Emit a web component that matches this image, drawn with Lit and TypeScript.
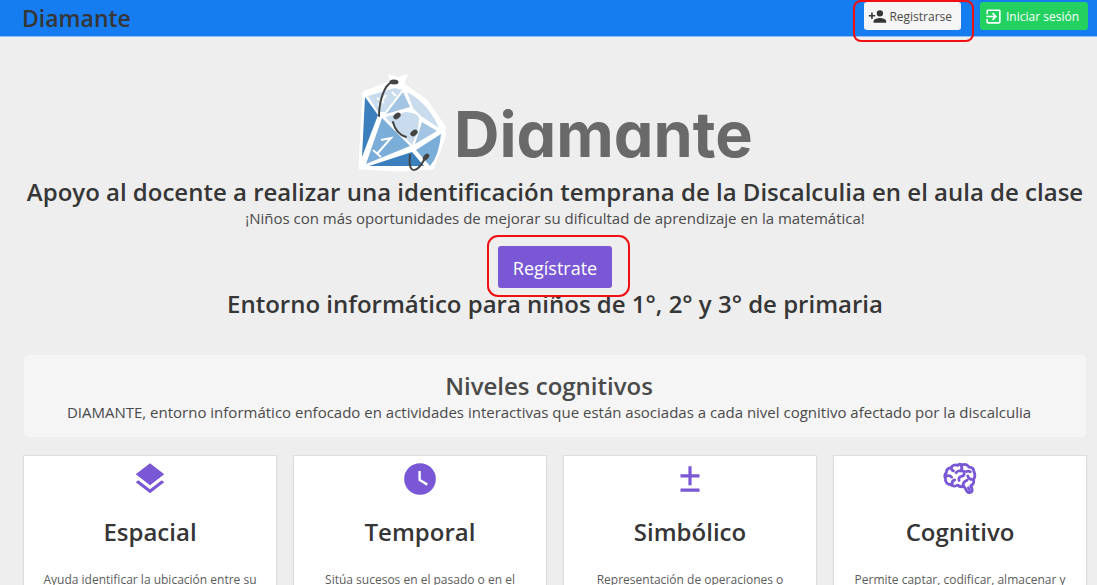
import { LitElement, html, css, svg } from "lit";
import { customElement, property } from "lit/decorators.js";

const layersIcon = svg`<path d="M12 16l7.36-5.73L21 9l-9-7-9 7 1.63 1.27M12 18.54l-7.38-5.73L3 14.07l9 7 9-7-1.63-1.27L12 18.54z"/>`;
const clockIcon = svg`<path d="M12 2a10 10 0 1 0 0 20 10 10 0 0 0 0-20zm4.2 14.2L11 13V7h1.5v5.2l4.5 2.7-.8 1.3z"/>`;
const plusMinusIcon = svg`<path d="M11 4h2v5h5v2h-5v5h-2v-5H6V9h5zM6 18h12v2H6z"/>`;
const brainIcon = svg`<g fill="none" stroke="currentColor" stroke-width="1.8" stroke-linecap="round" stroke-linejoin="round">
  <path d="M10.500 3.400C8.800 2.800 7 3.400 6.400 4.900 4.600 4.900 3.300 6.200 3.400 7.900 2.400 9 2.300 10.700 2.800 11.800 2.600 13.900 4 15.500 6 15.500 7.200 16.700 9.300 16.700 10.500 15.900 11.600 16.900 13.200 17 14.300 16.600 15.200 17.500 15.700 18.400 16.300 19.600 17.200 21.300 20.100 20.500 19.600 18.300 19.400 17.500 19 16.900 18.800 16.200 20.600 15.600 21 13.700 20.500 12.400 21.600 11 21.600 8.700 20.900 7.600 20.700 5.600 19.400 4.500 17.800 4.500 16.600 2.900 14.600 2.500 13.100 3.100 12.200 2.500 11.200 2.700 10.500 3.400z"/>
  <path d="M12.800 3.600c.6 1.200.5 2.300-.2 3.400M14.500 7.200c-1.900-.7-3.900-.5-5 .8M6.500 5.100c.1.900.6 1.500 1.400 1.700M2.900 10.500c1.500-.9 2.900-.7 3.800.3M7 15.200c-.1-1.400.6-2.300 1.600-2.600M11.400 12.900c-.4-1.500.2-2.300 1.400-2.500 1.300-.2 1.900-.9 1.800-1.900M14 16.400c-.1-2 .8-3.200 2.400-3.600M20.300 12.200c-1.700.2-3.200-.5-3.400-2.200M18.500 7.400c-.9-.5-1.700-.5-2.400-.1M17.300 17.600l.6 1"/>
</g>`;

const levels = [
  { title: "Espacial", text: "Ayuda identificar la ubicación entre su", icon: layersIcon },
  { title: "Temporal", text: "Sitúa sucesos en el pasado o en el", icon: clockIcon },
  { title: "Simbólico", text: "Representación de operaciones o", icon: plusMinusIcon },
  { title: "Cognitivo", text: "Permite captar, codificar, almacenar y", icon: brainIcon },
];

@customElement("level-card")
export class LevelCard extends LitElement {
  @property() heading = "";
  @property() text = "";
  @property({ attribute: false }) icon: unknown;

  static styles = css`
    .card {
      background: #fff;
      box-shadow: 0 0 0 1px #dedede, 0 2px 3px rgba(10, 10, 10, 0.1);
      padding: 4px 12px 24px;
      text-align: center;
    }
    .icon {
      display: block;
      width: 38px;
      height: 38px;
      margin: 0 auto;
      fill: currentColor;
      color: #7957d5;
    }
    .title {
      margin: 16px 0 20px;
      font-size: 24px;
      line-height: 36px;
      font-weight: 600;
      color: #363636;
    }
    .text {
      margin: 0;
      font-size: 12px;
      line-height: 20px;
      color: #5c5c5c;
    }
  `;

  render() {
    return html`<article class="card">
      <svg class="icon" viewBox="0 0 24 24" aria-hidden="true">${this.icon}</svg>
      <h3 class="title">${this.heading}</h3>
      <p class="text">${this.text}</p>
    </article>`;
  }
}

@customElement("app-root")
export class AppRoot extends LitElement {
  static styles = css`
    :host {
      display: block;
      height: 100vh;
      overflow: hidden;
      background: #eee;
      color: #4a4a4a;
      font-family: "Open Sans", "Noto Sans", sans-serif;
    }
    * {
      box-sizing: border-box;
    }
    .nav {
      display: flex;
      align-items: flex-start;
      justify-content: space-between;
      height: 37px;
      padding: 2px 9px 0 22px;
      background: #167df0;
      border-bottom: 1px solid #8fc0f7;
    }
    .brand {
      font-size: 23px;
      line-height: 32px;
      font-weight: 600;
      color: #363636;
      text-decoration: none;
    }
    .actions {
      display: flex;
      gap: 19px;
    }
    .button {
      display: flex;
      align-items: center;
      justify-content: center;
      border: 0;
      border-radius: 3px;
      font-family: inherit;
      cursor: pointer;
      white-space: nowrap;
    }
    .small {
      height: 28px;
      gap: 2px;
      padding: 1px 9px 0 4px;
      font-size: 12px;
    }
    .light {
      background: #f5f5f5;
      color: #4a4a4a;
    }
    .success {
      gap: 3px;
      background: #23d160;
      color: #fff;
    }
    .glyph {
      width: 19px;
      height: 19px;
      fill: currentColor;
    }
    .light .glyph {
      color: #363636;
    }
    .marked {
      position: relative;
      display: inline-block;
    }
    .marked::after {
      content: "";
      position: absolute;
      inset: -2px -13px -12px -11px;
      border: 2px solid #f00f12;
      border-radius: 8px;
      pointer-events: none;
    }
    .marked.wide::after {
      inset: -11px -18px -9px -11px;
      border-radius: 11px;
    }
    .page {
      padding: 36px 11px 0 24px;
      text-align: center;
    }
    .logo {
      display: block;
      width: 400px;
      height: 103px;
      margin: 0 auto;
      overflow: visible;
    }
    .logo-text {
      font-family: "Inter", sans-serif;
      font-feature-settings: "cv11";
      font-size: 63px;
      font-weight: 700;
      fill: #696969;
    }
    .title {
      margin: 0;
      font-size: 24px;
      line-height: 32px;
      font-weight: 600;
      color: #363636;
    }
    .lead {
      margin: 0;
      font-size: 15px;
      line-height: 20px;
    }
    .cta {
      margin: 18px 0 0;
      line-height: 0;
    }
    .primary {
      height: 42px;
      padding: 2px 15px 0;
      background: #7957d5;
      color: #fff;
      font-size: 18px;
    }
    .panel {
      margin: 35px 0 19px;
      padding: 15px 24px 15px 12px;
      border-radius: 4px;
      background: #f5f5f5;
    }
    .panel .title {
      color: #4a4a4a;
    }
    .levels {
      display: grid;
      grid-template-columns: repeat(4, minmax(0, 1fr));
      gap: 18px;
    }
  `;

  render() {
    return html`
      <nav class="nav">
        <a class="brand" href="#">Diamante</a>
        <div class="actions">
          <div class="marked">
            <button class="button small light" type="button">
              <svg class="glyph" viewBox="0 0 24 24" aria-hidden="true">
                <path d="M15 14c-2.670 0-8 1.330-8 4v2h16v-2c0-2.670-5.330-4-8-4m-9-4V7H4v3H1v2h3v3h2v-3h3v-2m6 2a4 4 0 0 0 4-4 4 4 0 0 0-4-4 4 4 0 0 0-4 4 4 4 0 0 0 4 4z" />
              </svg>
              Registrarse
            </button>
          </div>
          <button class="button small success" type="button">
            <svg class="glyph" viewBox="0 0 24 24" aria-hidden="true">
              <path d="M19 3H5c-1.110 0-2 .89-2 2v4h2V5h14v14H5v-4H3v4a2 2 0 0 0 2 2h14a2 2 0 0 0 2-2V5c0-1.110-.9-2-2-2m-8.920 12.580L11.500 17l5-5-5-5-1.420 1.410L12.670 11H3v2h9.670l-2.590 2.580z" />
            </svg>
            Iniciar sesión
          </button>
        </div>
      </nav>
      <main class="page">
        <svg class="logo" viewBox="0 0 400 103" role="img" aria-label="Diamante">
          <g transform="translate(-15 -8)">
            <path d="M25 28L50 19 62 20 85 36 103 62 103 72 92 102 62 104 21 102z" fill="#fff" stroke="#fff" stroke-width="5" stroke-linejoin="round" />
            <path d="M48 9L58 12 68 9 63 22 52 22z" fill="#fff" />
            <path d="M25 32L38 50 22 92z" fill="#3b7fbc" />
            <path d="M28 31L55 23 62 25 45 47 38 47z" fill="#c8dcee" />
            <path d="M63 27L70 42 46 49z" fill="#a3c5e3" />
            <path d="M67 27Q88 38 99 63L81 51 73 43z" fill="#c8dcee" />
            <path d="M45 52L66 47Q78 48 79 53L78 66 72 80z" fill="#c8dcee" />
            <path d="M82 57L97 66 75 79z" fill="#a3c5e3" />
            <path d="M42 53L70 81 26 99z" fill="#7badd9" />
            <path d="M101 69Q99 91 90 101L76 85z" fill="#7badd9" />
            <path d="M29 101L72 87 84 101z" fill="#3b7fbc" />
            <g fill="none" stroke="#fff" stroke-width="2">
              <path d="M41 75L51 73 37 89M33 85L41 92M37 33L44 38M46 30L38 41M52 27L56 31" />
            </g>
            <g fill="none" stroke="#444" stroke-width="2" stroke-linecap="round">
              <path d="M39 51C39 37 44 20 52 17M53 57Q56 69 66 72M70 90C69 99 70 105 74 105 79 105 82 98 86 92" />
            </g>
            <g fill="#444">
              <ellipse cx="54" cy="17" rx="4.500" ry="2.500" />
              <ellipse cx="57" cy="51" rx="4" ry="2.700" transform="rotate(-35 57 51)" />
              <ellipse cx="74" cy="68" rx="4" ry="2.700" transform="rotate(-35 74 68)" />
              <ellipse cx="86" cy="92" rx="4" ry="2.500" transform="rotate(-50 86 92)" />
            </g>
          </g>
          <text class="logo-text" x="99" y="84">Diamante</text>
        </svg>
        <h1 class="title">Apoyo al docente a realizar una identificación temprana de la Discalculia en el aula de clase</h1>
        <p class="lead">¡Niños con más oportunidades de mejorar su dificultad de aprendizaje en la matemática!</p>
        <div class="cta">
          <div class="marked wide">
            <button class="button primary" type="button">Regístrate</button>
          </div>
        </div>
        <h2 class="title">Entorno informático para niños de 1°, 2° y 3° de primaria</h2>
        <section class="panel">
          <h2 class="title">Niveles cognitivos</h2>
          <p class="lead">DIAMANTE, entorno informático enfocado en actividades interactivas que están asociadas a cada nivel cognitivo afectado por la discalculia</p>
        </section>
        <section class="levels">
          ${levels.map(
            (l) => html`<level-card .heading=${l.title} .text=${l.text} .icon=${l.icon}></level-card>`
          )}
        </section>
      </main>
    `;
  }
}
